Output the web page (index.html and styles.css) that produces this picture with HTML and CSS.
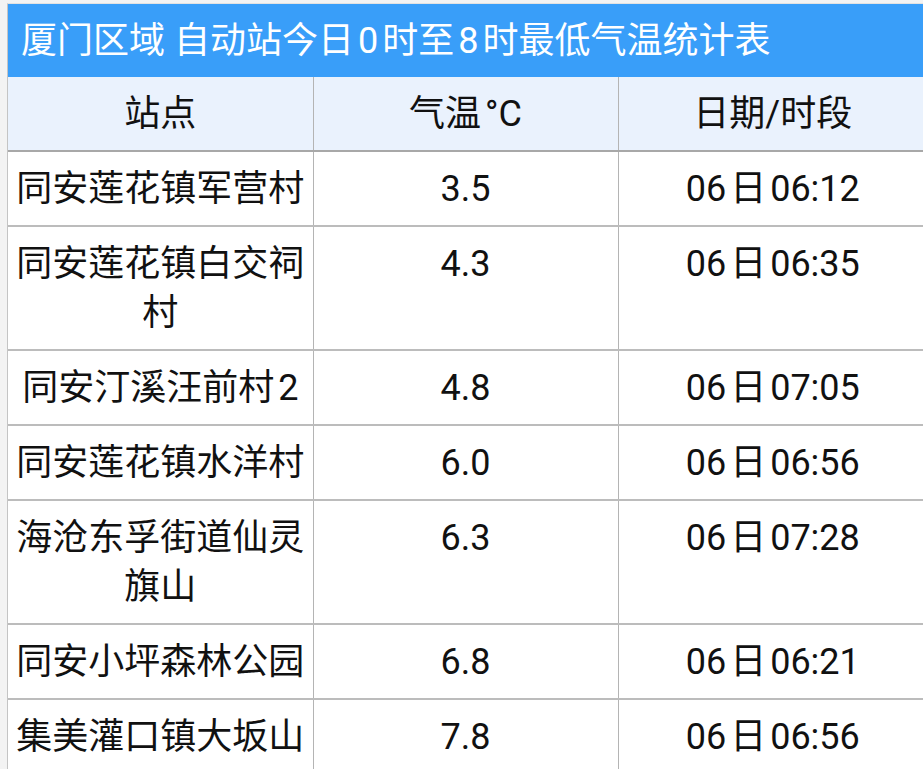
FILE: index.html
```html
<!DOCTYPE html>
<html lang="zh-CN">
<head>
<meta charset="utf-8">
<title>厦门区域 自动站今日0时至8时最低气温统计表</title>
<link rel="stylesheet" href="styles.css">
</head>
<body>
<div class="page">
  <div class="sheet">
    <div class="title">厦门区域 自动站今日<span class="gap">0</span>时至<span class="gap">8</span>时最低气温统计表</div>
    <table class="grid">
      <colgroup>
        <col class="c1"><col class="c2"><col class="c3">
      </colgroup>
      <thead>
        <tr><th>站点</th><th>气温<span class="gl">°C</span></th><th>日期/时段</th></tr>
      </thead>
      <tbody>
        <tr><td>同安莲花镇军营村</td><td>3.5</td><td>06<span class="gap">日</span>06:12</td></tr>
        <tr><td>同安莲花镇白交祠村</td><td>4.3</td><td>06<span class="gap">日</span>06:35</td></tr>
        <tr><td>同安汀溪汪前村<span class="gl">2</span></td><td>4.8</td><td>06<span class="gap">日</span>07:05</td></tr>
        <tr><td>同安莲花镇水洋村</td><td>6.0</td><td>06<span class="gap">日</span>06:56</td></tr>
        <tr><td>海沧东孚街道仙灵旗山</td><td>6.3</td><td>06<span class="gap">日</span>07:28</td></tr>
        <tr><td>同安小坪森林公园</td><td>6.8</td><td>06<span class="gap">日</span>06:21</td></tr>
        <tr><td>集美灌口镇大坂山</td><td>7.8</td><td>06<span class="gap">日</span>06:56</td></tr>
      </tbody>
    </table>
  </div>
</div>
</body>
</html>
```

FILE: styles.css
```css
html, body {
  margin: 0;
  padding: 0;
  overflow: hidden;
  background: #f3f3f3;
}
.page {
  padding-top: 3px;
  padding-left: 7px;
}
.sheet {
  width: 919px;
  background: #ffffff;
  border-left: 1px solid #c4c4c4;
  border-top: 1px solid #e2e2e2;
  font-family: Roboto, "Noto Sans CJK SC", sans-serif;
  color: #111111;
}
.title {
  background: #399ef9;
  color: #ffffff;
  font-size: 36px;
  height: 73px;
  line-height: 74px;
  padding-left: 13px;
  white-space: nowrap;
}
.gap {
  margin: 0 4px;
}
.gl {
  margin-left: 4px;
}
.grid {
  width: 919px;
  border-collapse: collapse;
  table-layout: fixed;
  font-size: 36px;
}
.c1 { width: 305px; }
.c2 { width: 305px; }
.c3 { width: 309px; }
.grid th,
.grid td {
  text-align: center;
  vertical-align: top;
  line-height: 49px;
  padding: 13px 6px 11px;
  border-left: 1px solid #b4b4b4;
  border-bottom: 2px solid #bcbcbc;
  font-weight: 400;
}
.grid th:first-child,
.grid td:first-child {
  border-left: 0;
}
.grid th {
  background: #eaf2fd;
  border-bottom-color: #a8a8a8;
}
```
